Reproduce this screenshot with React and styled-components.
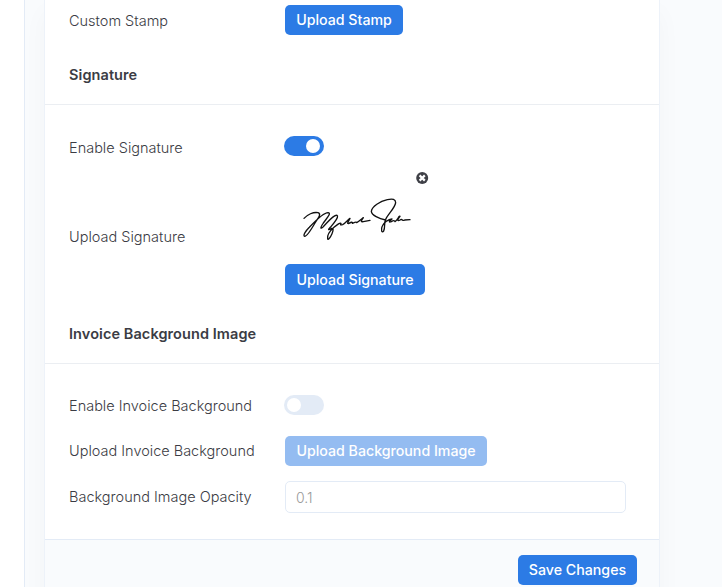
import React, { Component } from 'react';
import styled, { createGlobalStyle } from 'styled-components';

export default class App extends Component {

    state = {
        signature: true,
        background: false,
        opacity: '0.1'
    }

    toggle = (key) => {
        this.setState({ [key]: !this.state[key] })
    }

    render() {
        const { signature, background, opacity } = this.state

        return (
            <Page>
                <GlobalStyle />
                <Sidebar />
                <Content>
                    <Card>
                        <Body>
                            <Row height={40}>
                                <Label drop={2}>Custom Stamp</Label>
                                <Button width={118}>Upload Stamp</Button>
                            </Row>

                            <Heading top={25}>Signature</Heading>

                            <Row height={82}>
                                <Label drop={4}>Enable Signature</Label>
                                <Switch on={signature} onClick={() => this.toggle('signature')}><Knob /></Switch>
                            </Row>
                            <Row height={93}>
                                <Label drop={6}>Upload Signature</Label>
                                <Preview>
                                    <Remove />
                                    <Signature />
                                    <Button width={140} height={31}>Upload Signature</Button>
                                </Preview>
                            </Row>

                            <Heading top={44}>Invoice Background Image</Heading>

                            <Row height={82}>
                                <Label drop={2}>Enable Invoice Background</Label>
                                <Switch on={background} onClick={() => this.toggle('background')}><Knob /></Switch>
                            </Row>
                            <Row height={10}>
                                <Label>Upload Invoice Background</Label>
                                <Button width={202} disabled={!background}>Upload Background Image</Button>
                            </Row>
                            <Row height={82}>
                                <Label>Background Image Opacity</Label>
                                <Input value={opacity} onChange={e => this.setState({ opacity: e.target.value })} />
                            </Row>
                        </Body>
                        <Footer>
                            <Button width={119}>Save Changes</Button>
                        </Footer>
                    </Card>
                </Content>
            </Page>
        )
    }
}

const Remove = () => (
    <RemoveButton aria-label="Remove">
        <svg width="13" height="13" viewBox="0 0 13 13">
            <circle cx="6.2" cy="6" r="6" fill="#3f4047" />
            <path d="M3.6 3.4 8.8 8.6M8.8 3.4 3.6 8.6" stroke="#fff" strokeWidth="2.2" />
        </svg>
    </RemoveButton>
)

const Signature = () => (
    <SignatureArt viewBox="0 0 375 165">
        <path d="M27 82C37 71 55 62 69 65C81 69 68 83 60 96C49 115 35 136 29 136C22 134 34 118 43 109C61 90 85 65 99 65C112 66 91 86 83 99C75 111 76 115 84 108C98 94 116 70 126 73C133 77 116 98 106 109C98 117 99 119 110 112C116 111 115 119 111 128C106 139 99 150 98 143C96 133 107 118 117 109C127 100 136 94 138 97C136 102 135 103 143 101C151 97 158 87 165 82C160 92 155 98 160 98C167 94 174 91 172 97C179 94 183 91 185 95C192 91 202 82 205 80C199 90 195 93 205 92L225 88" />
        <path d="M272 87C252 83 230 73 229 61C231 46 255 31 277 26C293 22 302 25 302 35C301 49 280 69 273 83C265 99 272 106 266 120C260 128 257 115 262 105C267 94 280 85 291 84C282 91 280 95 289 92C295 88 299 88 300 92C308 87 312 73 315 76C306 87 307 92 315 87C323 81 321 92 329 87L345 86" />
    </SignatureArt>
)

//CSS//
const GlobalStyle = createGlobalStyle`
* {
box-sizing: border-box;
}

body {
margin: 0;
overflow: hidden;
background: #f9fbfd;
font-family: Inter, "Liberation Sans", sans-serif;
font-size: 14.5px;
color: #3b3c44;
}
`

const Page = styled.div`
display: flex;
height: 587px;
overflow: hidden;
`

const Sidebar = styled.div`
width: 25px;
background: white;
border-right: 1px solid #e3ebf6;
`

const Content = styled.div`
flex: 1;
padding: 0 62px 0 19px;
`

const Card = styled.div`
width: 616px;
height: 620px;
background: white;
border: 1px solid #edf2f9;
border-top: 0;
box-shadow: 0 12px 24px rgba(18, 38, 63, .03);
`

const Body = styled.div`
height: 539px;
`

const Row = styled.div`
display: flex;
align-items: center;
height: ${props => props.height}px;
padding-left: 24px;
`

const Label = styled.div`
flex: none;
width: 216px;
padding-top: ${props => props.drop || 0}px;
font-weight: 300;
line-height: 20px;
`

const Heading = styled.div`
padding: ${props => props.top}px 24px 19px;
border-bottom: 1px solid #ebeef2;
font-weight: 600;
line-height: 20px;
letter-spacing: .08px;
`

const Button = styled.button`
flex: none;
width: ${props => props.width}px;
height: ${props => props.height || 30}px;
padding: 0 0 1px;
border: 0;
border-radius: 5px;
background: #2c7be5;
color: white;
font: inherit;
font-size: 14.2px;
font-weight: 500;
white-space: nowrap;
cursor: pointer;

&:disabled{
    opacity: .5;
}
`

const Switch = styled.button`
display: flex;
justify-content: ${props => props.on ? 'flex-end' : 'flex-start'};
align-items: center;
width: 40px;
height: 20px;
margin-left: -1px;
padding: 0 4px 0 3px;
border: 0;
border-radius: 10px;
background: ${props => props.on ? '#2c7be5' : '#e3ebf6'};
cursor: pointer;
`

const Knob = styled.span`
width: 14px;
height: 14px;
border-radius: 50%;
background: white;
`

const Preview = styled.div`
display: flex;
flex-direction: column;
align-items: flex-start;
`

const RemoveButton = styled.button`
display: flex;
margin-left: 130.5px;
padding: 0;
border: 0;
background: none;
cursor: pointer;
`

const SignatureArt = styled.svg`
width: 125px;
height: 55px;
margin: 6px 0 18px 10px;
fill: none;
stroke: #111;
stroke-width: 4;
stroke-linecap: round;
stroke-linejoin: round;
`

const Input = styled.input`
width: 341px;
height: 32px;
padding: 0 10px;
border: 1px solid #e3ebf6;
border-radius: 5px;
outline: 0;
color: #999;
font: inherit;
font-size: 14px;
font-weight: 300;
`

const Footer = styled.div`
display: flex;
justify-content: flex-end;
padding: 15px 22px;
height: 81px;
border-top: 1px solid #e3ebf6;
background: #f9fbfd;
`
